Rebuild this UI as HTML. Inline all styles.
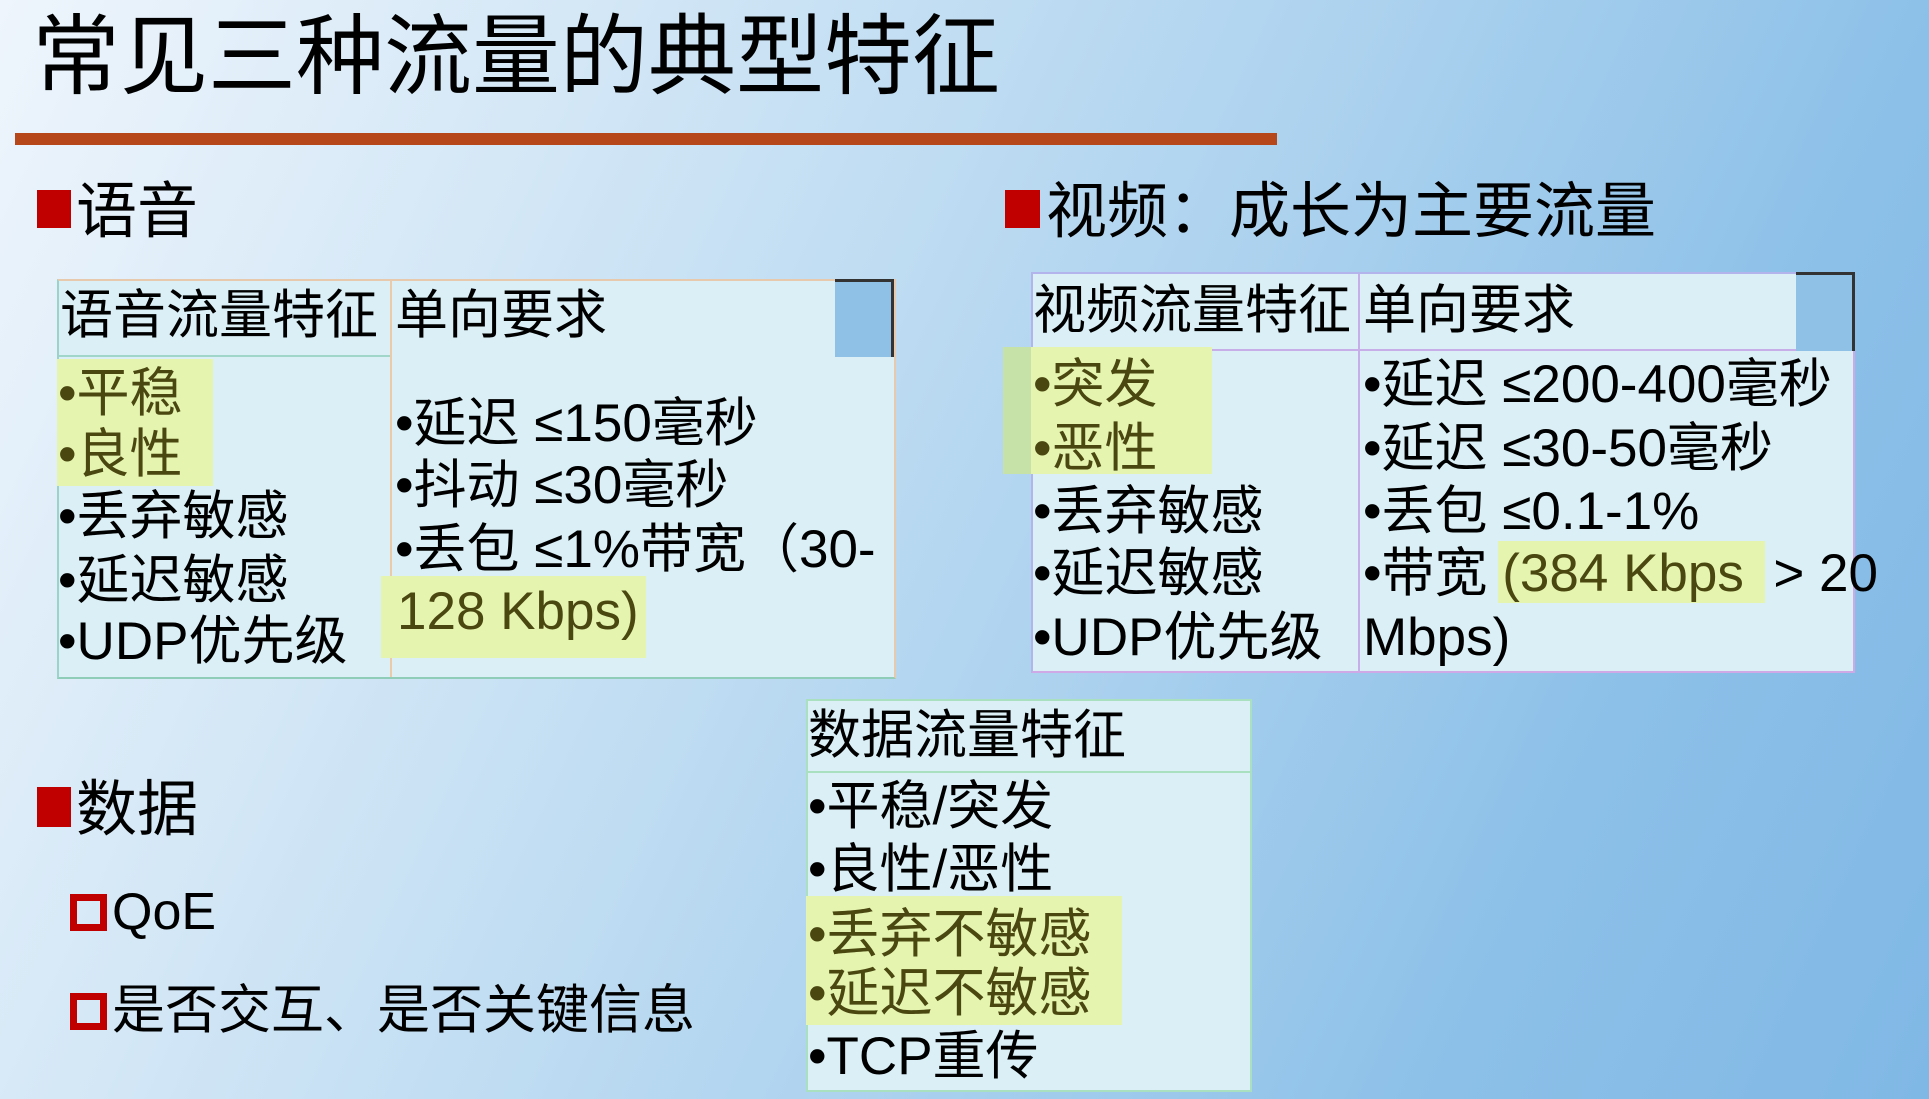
<!DOCTYPE html>
<html><head><meta charset="utf-8"><style>
html,body{margin:0;padding:0}
body{width:1929px;height:1099px;position:relative;overflow:hidden;
background:linear-gradient(115deg,#eef5fc 0%,#d3e7f6 25%,#aed3ef 55%,#8cc0e8 80%,#80b8e5 100%);
font-family:"Liberation Sans","Noto Sans CJK SC",sans-serif;color:#000}
.a{position:absolute;white-space:nowrap}
.t{font-size:53px;line-height:62px;height:62px}
.hl{position:absolute;background:#e5f5b0}
.o{color:#4a4710}
.sq{position:absolute;background:#c00000}
.hs{position:absolute;border:7px solid #c00000;box-sizing:border-box;background:transparent}
.tb{position:absolute;background:#daeff6;box-sizing:border-box}
</style></head><body>
<div class="a" style="left:32px;top:4px;font-size:88px;line-height:106px;">常见三种流量的典型特征</div>
<div class="a" style="left:15px;top:133px;width:1262px;height:12px;background:#b5471b"></div>

<div class="sq" style="left:37px;top:190px;width:34px;height:38px"></div>
<div class="a" style="left:76px;top:175px;font-size:61px;line-height:72px">语音</div>

<div class="tb" style="left:57px;top:279px;width:839px;height:400px;border:2px solid #e7c9ae;border-left-color:#9cd3c8;border-bottom-color:#8fcdb8"></div>
<div class="a" style="left:59px;top:355px;width:331px;height:2px;background:#9fd6c9"></div>
<div class="a" style="left:390px;top:281px;width:2px;height:396px;background:#ecc9a8"></div>
<div class="a" style="left:835px;top:279px;width:59px;height:78px;background:#8fc1e6;border-top:3px solid #333;border-right:3px solid #333;box-sizing:border-box"></div>
<div class="a t" style="left:60px;top:285px">语音流量特征</div>
<div class="a t" style="left:395px;top:285px">单向要求</div>
<div class="hl" style="left:57px;top:359px;width:156px;height:127px"></div>
<div class="a t o" style="left:58px;top:363px">•平稳</div>
<div class="a t o" style="left:58px;top:424px">•良性</div>
<div class="a t" style="left:58px;top:486px">•丢弃敏感</div>
<div class="a t" style="left:58px;top:550px">•延迟敏感</div>
<div class="a t" style="left:58px;top:611px">•UDP优先级</div>
<div class="a t" style="left:395px;top:393px">•延迟 ≤150毫秒</div>
<div class="a t" style="left:395px;top:455px">•抖动 ≤30毫秒</div>
<div class="a t" style="left:395px;top:519px">•丢包 ≤1%带宽（30-</div>
<div class="hl" style="left:381px;top:576px;width:265px;height:82px"></div>
<div class="a t o" style="left:397px;top:581px">128 Kbps)</div>

<div class="sq" style="left:1005px;top:190px;width:35px;height:38px"></div>
<div class="a" style="left:1046px;top:175px;font-size:61px;line-height:72px">视频：成长为主要流量</div>

<div class="tb" style="left:1031px;top:272px;width:824px;height:401px;border:2px solid #b4b4ec;border-right-color:#cfa8e6;border-bottom-color:#cfa8e6"></div>
<div class="a" style="left:1358px;top:274px;width:2px;height:397px;background:#c8aee8"></div>
<div class="a" style="left:1033px;top:349px;width:820px;height:2px;background:#c8aee8"></div>
<div class="a" style="left:1796px;top:272px;width:59px;height:79px;background:#8fc1e6;border-top:3px solid #333;border-right:3px solid #333;box-sizing:border-box"></div>
<div class="a t" style="left:1033px;top:280px">视频流量特征</div>
<div class="a t" style="left:1363px;top:280px">单向要求</div>
<div class="hl" style="left:1003px;top:347px;width:209px;height:127px"></div>
<div class="a" style="left:1003px;top:347px;width:28px;height:127px;background:#c6e2a8"></div>
<div class="a t o" style="left:1033px;top:354px">•突发</div>
<div class="a t o" style="left:1033px;top:418px">•恶性</div>
<div class="a t" style="left:1033px;top:481px">•丢弃敏感</div>
<div class="a t" style="left:1033px;top:543px">•延迟敏感</div>
<div class="a t" style="left:1033px;top:607px">•UDP优先级</div>
<div class="a t" style="left:1363px;top:354px">•延迟 ≤200-400毫秒</div>
<div class="a t" style="left:1363px;top:418px">•延迟 ≤30-50毫秒</div>
<div class="a t" style="left:1363px;top:481px">•丢包 ≤0.1-1%</div>
<div class="hl" style="left:1498px;top:541px;width:267px;height:62px"></div>
<div class="a t" style="left:1363px;top:543px">•带宽 <span class="o">(384 Kbps </span>&nbsp;&gt; 20</div>
<div class="a t" style="left:1363px;top:607px">Mbps)</div>

<div class="sq" style="left:37px;top:787px;width:34px;height:40px"></div>
<div class="a" style="left:76px;top:773px;font-size:61px;line-height:72px">数据</div>
<div class="hs" style="left:70px;top:894px;width:37px;height:37px"></div>
<div class="a" style="left:112px;top:880px;font-size:52px;line-height:64px">QoE</div>
<div class="hs" style="left:70px;top:993px;width:37px;height:37px"></div>
<div class="a" style="left:112px;top:979px;font-size:53px;line-height:64px">是否交互、是否关键信息</div>

<div class="tb" style="left:806px;top:699px;width:446px;height:393px;border:2px solid #a8e0c0"></div>
<div class="a" style="left:808px;top:771px;width:442px;height:2px;background:#a8e0c0"></div>
<div class="a t" style="left:808px;top:705px">数据流量特征</div>
<div class="a t" style="left:808px;top:776px">•平稳/突发</div>
<div class="a t" style="left:808px;top:839px">•良性/恶性</div>
<div class="hl" style="left:806px;top:896px;width:316px;height:129px"></div>
<div class="a t o" style="left:808px;top:904px">•丢弃不敏感</div>
<div class="a t o" style="left:808px;top:963px">•延迟不敏感</div>
<div class="a t" style="left:808px;top:1026px">•TCP重传</div>
</body></html>
